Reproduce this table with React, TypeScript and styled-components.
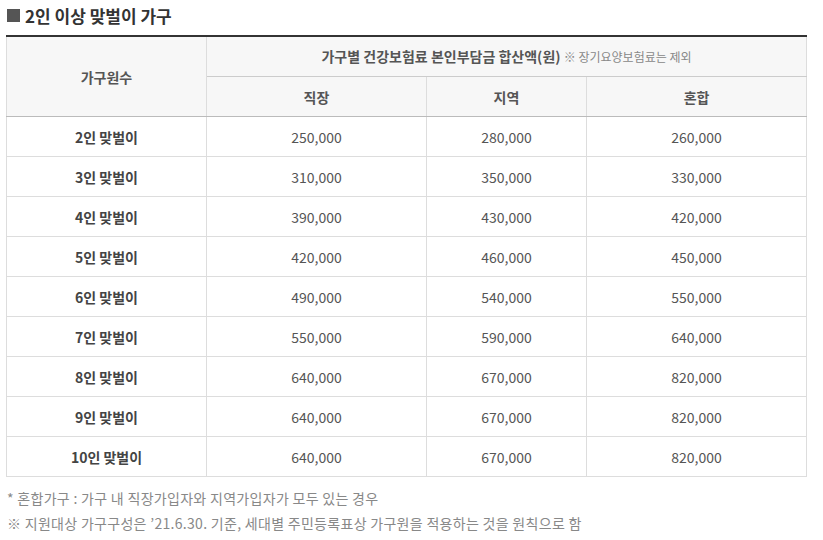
import React from "react";
import styled, { createGlobalStyle } from "styled-components";

const rows = [
  ["2인 맞벌이", "250,000", "280,000", "260,000"],
  ["3인 맞벌이", "310,000", "350,000", "330,000"],
  ["4인 맞벌이", "390,000", "430,000", "420,000"],
  ["5인 맞벌이", "420,000", "460,000", "450,000"],
  ["6인 맞벌이", "490,000", "540,000", "550,000"],
  ["7인 맞벌이", "550,000", "590,000", "640,000"],
  ["8인 맞벌이", "640,000", "670,000", "820,000"],
  ["9인 맞벌이", "640,000", "670,000", "820,000"],
  ["10인 맞벌이", "640,000", "670,000", "820,000"],
];

const Global = createGlobalStyle`
  body {
    margin: 0;
    background: #fff;
    font-family: "Noto Sans CJK KR", "Noto Sans", sans-serif;
  }
`;

const Wrapper = styled.div`
  padding: 0 6px;
  width: 800px;
`;

const Title = styled.h3`
  margin: 0;
  height: 30px;
  display: flex;
  align-items: center;
  gap: 5px;
  font-size: 17px;
  font-weight: 700;
  color: #333;
  padding-left: 1px;
`;

const Square = styled.span`
  width: 13px;
  height: 13px;
  background: #555;
`;

const Table = styled.table`
  margin-top: 5px;
  width: 800px;
  border-collapse: collapse;
  table-layout: fixed;
  border-top: 2px solid #333;
  font-size: 14px;
`;

const Th = styled.th<{ $bottom?: boolean }>`
  height: 39px;
  padding: 0;
  background: #f7f7f7;
  color: #555;
  font-weight: 700;
  border: 1px solid #ddd;
  border-bottom: 1px solid ${(p) => (p.$bottom ? "#bbb" : "#ccc")};
  line-height: 20px;
`;

const Note = styled.span`
  font-size: 12px;
  font-weight: 400;
  color: #888;
`;

const Td = styled.td<{ $label?: boolean }>`
  height: 39px;
  padding: 0;
  text-align: center;
  border: 1px solid #ddd;
  color: ${(p) => (p.$label ? "#444" : "#555")};
  font-weight: ${(p) => (p.$label ? 700 : 400)};
  line-height: 20px;
`;

const Foot = styled.p`
  margin: 0;
  font-size: 14px;
  letter-spacing: 0.3px;
  color: #888;
  line-height: 25px;
  padding-left: 1px;
  &:first-of-type {
    margin-top: 9px;
  }
`;

export default function App() {
  return (
    <Wrapper>
      <Global />
      <Title>
        <Square />
        2인 이상 맞벌이 가구
      </Title>
      <Table>
        <colgroup>
          <col style={{ width: 200 }} />
          <col style={{ width: 220 }} />
          <col style={{ width: 160 }} />
          <col style={{ width: 220 }} />
        </colgroup>
        <thead>
          <tr>
            <Th rowSpan={2} $bottom>
              가구원수
            </Th>
            <Th colSpan={3}>
              가구별 건강보험료 본인부담금 합산액(원) <Note>※ 장기요양보험료는 제외</Note>
            </Th>
          </tr>
          <tr>
            <Th $bottom>직장</Th>
            <Th $bottom>지역</Th>
            <Th $bottom>혼합</Th>
          </tr>
        </thead>
        <tbody>
          {rows.map((r) => (
            <tr key={r[0]}>
              <Td $label>{r[0]}</Td>
              <Td>{r[1]}</Td>
              <Td>{r[2]}</Td>
              <Td>{r[3]}</Td>
            </tr>
          ))}
        </tbody>
      </Table>
      <Foot>* 혼합가구 : 가구 내 직장가입자와 지역가입자가 모두 있는 경우</Foot>
      <Foot>※ 지원대상 가구구성은 ’21.6.30. 기준, 세대별 주민등록표상 가구원을 적용하는 것을 원칙으로 함</Foot>
    </Wrapper>
  );
}
